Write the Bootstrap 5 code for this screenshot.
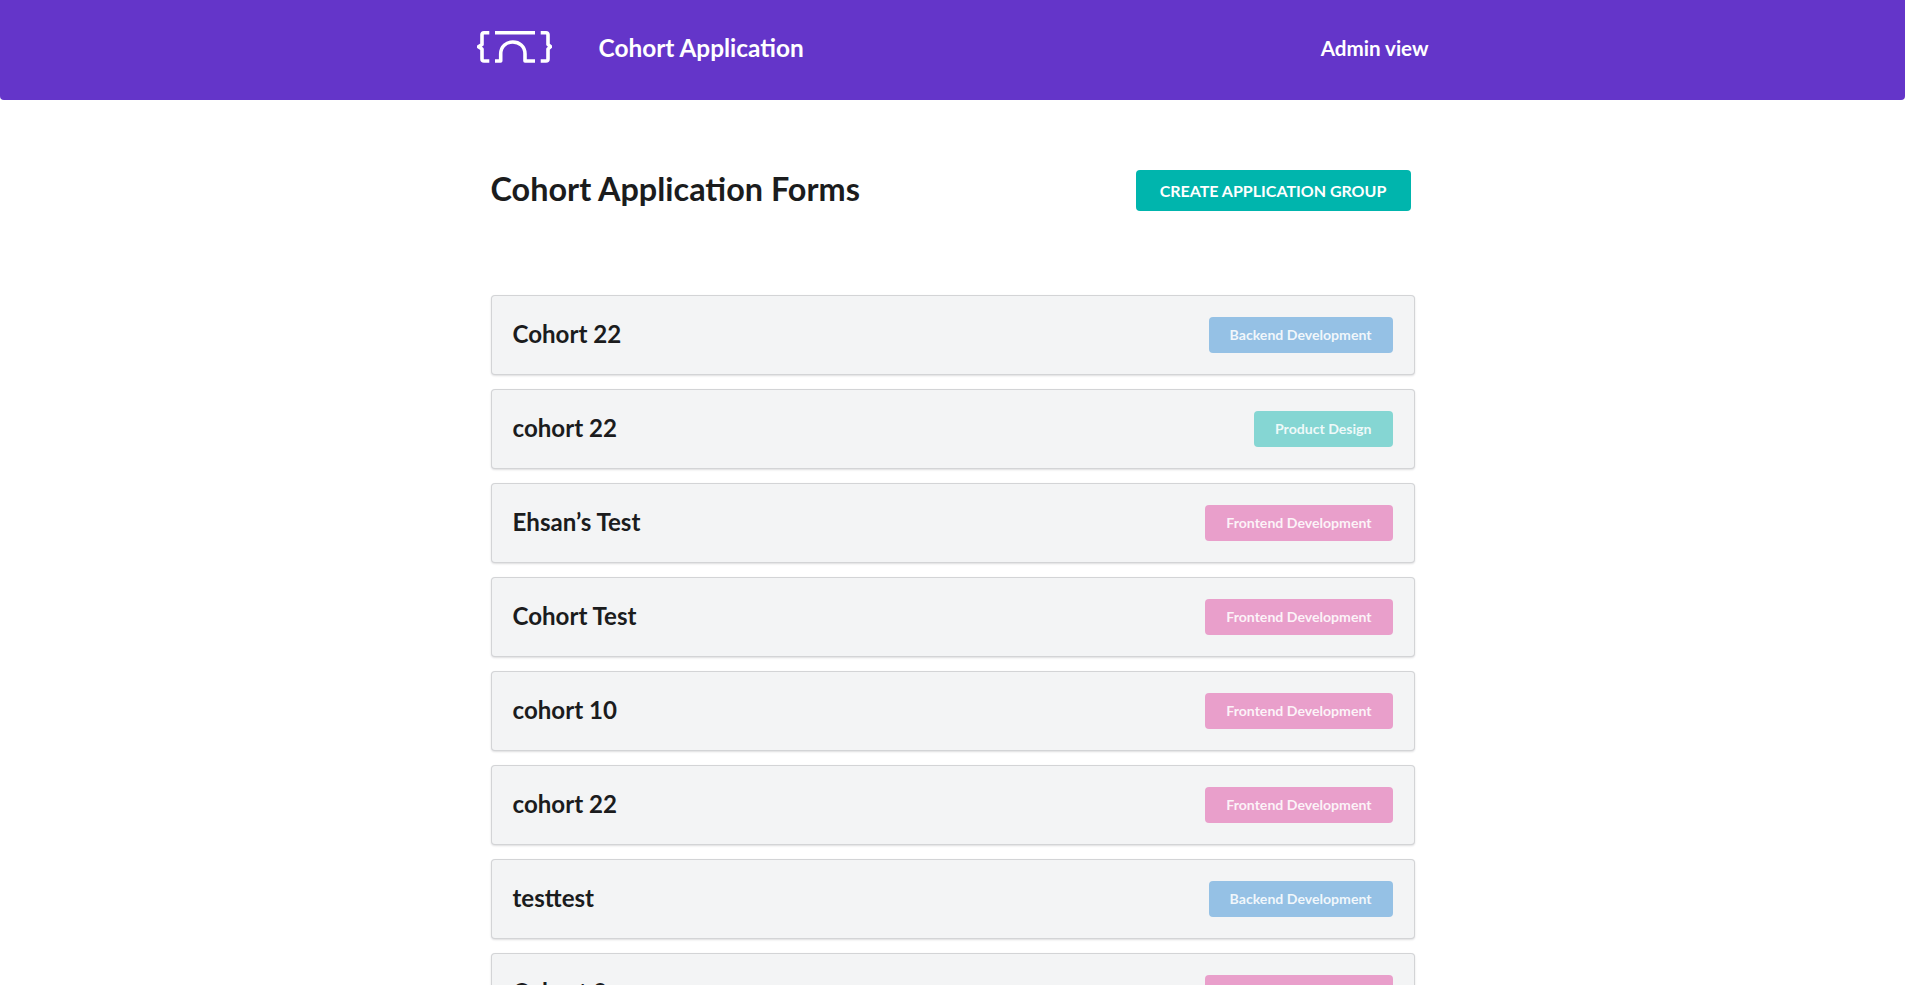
<!DOCTYPE html>
<html lang="en">
<head>
    <meta charset="UTF-8">
    <title>Cohort Application</title>
    <link href="https://cdn.jsdelivr.net/npm/bootstrap@5.3.0/dist/css/bootstrap.min.css" rel="stylesheet">
    <style>
        html, body {
            overflow: hidden;
            height: 985px;
        }
        body {
            background: #fff;
            font-family: Lato, "Liberation Sans", sans-serif;
            color: #1b1c1d;
        }
        .top-bar {
            background: #6435c9;
            height: 100px;
            padding: 0;
            border-radius: 0 0 4px 4px;
        }
        .top-inner {
            width: 952px;
            padding-bottom: 3px;
        }
        .top-logo {
            margin-bottom: 2px;
        }
        .top-title {
            font-size: 24.4px;
            font-weight: 700;
            margin-left: 47px;
            color: #fff;
        }
        .top-link {
            font-size: 20.6px;
            font-weight: 700;
            color: #fff;
            text-decoration: none;
        }
        .page-wrap {
            width: 924px;
            margin: 0 auto;
        }
        .page-head {
            padding: 68px 4px 0 0;
            height: 195px;
        }
        .page-title {
            font-size: 32.4px;
            font-weight: 700;
            line-height: 1.28;
            margin: 0;
            color: #1b1c1d;
        }
        .create-btn {
            background: #00b5ad;
            color: #fff;
            border: none;
            border-radius: 4px;
            font-size: 16px;
            font-weight: 700;
            height: 41px;
            width: 275px;
            padding: 0;
            margin-top: 2px;
        }
        .create-btn:hover {
            background: #009c95;
            color: #fff;
        }
        .cohort-list {
            gap: 14px;
        }
        .cohort-row {
            background: #f3f4f5;
            border: 1px solid rgba(34,36,38,.15);
            border-radius: 4px;
            box-shadow: 0 1px 2px 0 rgba(34,36,38,.15);
            height: 80px;
            padding: 0 21px;
        }
        .cohort-name {
            font-size: 24.1px;
            font-weight: 700;
            margin: 0;
            padding-bottom: 2px;
            line-height: 1;
        }
        .track-tag {
            font-size: 14.1px;
            font-weight: 700;
            color: rgba(255,255,255,.88);
            height: 36px;
            padding: 0 21px;
            border-radius: 4px;
        }
        .track-backend { background: #95c1e5; }
        .track-design { background: #85d6d3; }
        .track-frontend { background: #e99fcb; }
    </style>
</head>
<body>
    <nav class="navbar top-bar">
        <div class="top-inner mx-auto d-flex align-items-center justify-content-between">
            <div class="d-flex align-items-center">
                <!-- logo: braces with an arch -->
                <svg class="top-logo" width="75" height="32" viewBox="0 0 75 32" fill="none" stroke="#fff" stroke-width="3.6" stroke-linejoin="round">
                    <path d="M12.3 1.8H7q-2 0-2 2V13.5L1.5 15.7 5 18v10q0 2 2 2H12.3"/>
                    <path d="M18 1.8H58"/>
                    <path d="M18 30H23.7V23C23.7 7 48 7 48 23V30H58"/>
                    <path d="M63.7 1.8H69q2 0 2 2V13.5L73.5 15.7 71 18v10q0 2-2 2H63.7"/>
                </svg>
                <span class="top-title">Cohort Application</span>
            </div>
            <a class="top-link" href="#">Admin view</a>
        </div>
    </nav>

    <div class="page-wrap">
        <div class="page-head d-flex justify-content-between align-items-start">
            <h1 class="page-title">Cohort Application Forms</h1>
            <button type="button" class="btn create-btn">CREATE APPLICATION GROUP</button>
        </div>

        <div class="cohort-list d-flex flex-column">
            <div class="cohort-row d-flex align-items-center justify-content-between">
                <h2 class="cohort-name">Cohort 22</h2>
                <span class="track-tag track-backend d-flex align-items-center">Backend Development</span>
            </div>
            <div class="cohort-row d-flex align-items-center justify-content-between">
                <h2 class="cohort-name">cohort 22</h2>
                <span class="track-tag track-design d-flex align-items-center">Product Design</span>
            </div>
            <div class="cohort-row d-flex align-items-center justify-content-between">
                <h2 class="cohort-name">Ehsan’s Test</h2>
                <span class="track-tag track-frontend d-flex align-items-center">Frontend Development</span>
            </div>
            <div class="cohort-row d-flex align-items-center justify-content-between">
                <h2 class="cohort-name">Cohort Test</h2>
                <span class="track-tag track-frontend d-flex align-items-center">Frontend Development</span>
            </div>
            <div class="cohort-row d-flex align-items-center justify-content-between">
                <h2 class="cohort-name">cohort 10</h2>
                <span class="track-tag track-frontend d-flex align-items-center">Frontend Development</span>
            </div>
            <div class="cohort-row d-flex align-items-center justify-content-between">
                <h2 class="cohort-name">cohort 22</h2>
                <span class="track-tag track-frontend d-flex align-items-center">Frontend Development</span>
            </div>
            <div class="cohort-row d-flex align-items-center justify-content-between">
                <h2 class="cohort-name">testtest</h2>
                <span class="track-tag track-backend d-flex align-items-center">Backend Development</span>
            </div>
            <div class="cohort-row d-flex align-items-center justify-content-between">
                <h2 class="cohort-name">Cohort 9</h2>
                <span class="track-tag track-frontend d-flex align-items-center">Frontend Development</span>
            </div>
        </div>
    </div>

    <script src="https://cdn.jsdelivr.net/npm/bootstrap@5.3.0/dist/js/bootstrap.bundle.min.js"></script>
</body>
</html>
